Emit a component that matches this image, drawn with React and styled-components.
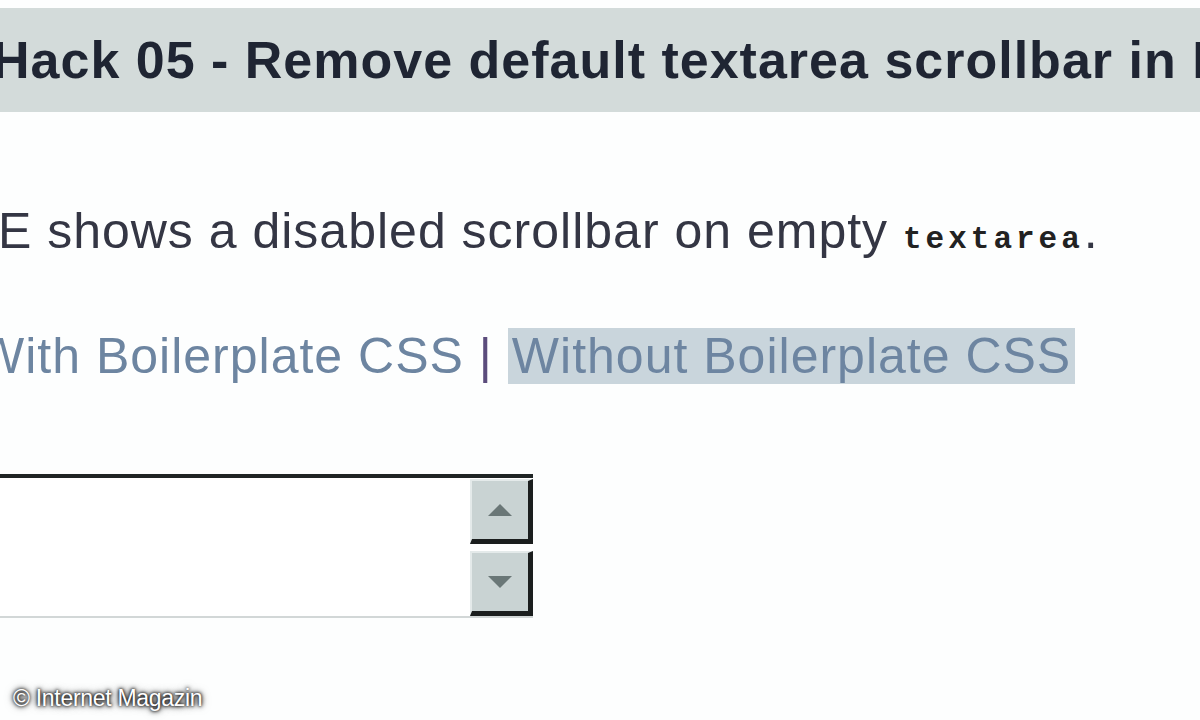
import styled, { createGlobalStyle } from 'styled-components';

const Global = createGlobalStyle`
  html, body {
    margin: 0;
    padding: 0;
    background: #ffffff;
  }
`;

const Page = styled.div`
  position: relative;
  width: 1200px;
  height: 720px;
  overflow: hidden;
  background: #fdfefe;
  font-family: "Liberation Sans", Arial, sans-serif;
`;

const Header = styled.h1`
  margin: 8px 0 0;
  height: 104px;
  display: flex;
  align-items: center;
  background: #d3dbda;
  color: #1f2533;
  font-size: 52px;
  font-weight: bold;
  letter-spacing: 1px;
  white-space: nowrap;
  text-indent: -8px;
`;

const Line = styled.p`
  margin: ${(p) => p.$top}px 0 0;
  text-indent: ${(p) => p.$indent}px;
  font-size: 50px;
  line-height: 60px;
  letter-spacing: ${(p) => p.$spacing ?? 1}px;
  white-space: nowrap;
  color: #343644;
`;

const Code = styled.code`
  font-family: "Liberation Mono", "Courier New", monospace;
  font-weight: bold;
  font-size: 31px;
  letter-spacing: 4px;
  color: #222;
`;

const Link = styled.span`
  color: #6d85a1;
  background: ${(p) => (p.$active ? '#c9d5dc' : 'transparent')};
  padding: 0 ${(p) => (p.$active ? 4 : 0)}px;
`;

const Sep = styled.span`
  color: #5b4c7c;
  margin: 0 ${(p) => p.$gap}px;
`;

const Field = styled.div`
  margin: 88px 0 0 -20px;
  width: 553px;
  height: 138px;
  display: flex;
  border-top: 4px solid #1f2424;
  border-bottom: 2px solid #d2d7d7;
  background: #ffffff;
`;

const TextArea = styled.div`
  flex: 1;
`;

const ScrollColumn = styled.div`
  width: 63px;
  display: flex;
  flex-direction: column;
  justify-content: space-between;
  padding: 1px 0 0;
`;

const ScrollButton = styled.div`
  height: 58px;
  display: flex;
  align-items: center;
  justify-content: center;
  background: #c9d3d3;
  border-top: 2px solid #e4eaea;
  border-left: 2px solid #e4eaea;
  border-right: 5px solid #1b1e1e;
  border-bottom: 5px solid #1b1e1e;
`;

const Arrow = styled.span`
  width: 0;
  height: 0;
  border-left: 12px solid transparent;
  border-right: 12px solid transparent;
  ${(p) =>
    p.$down
      ? 'border-top: 12px solid #6a7777;'
      : 'border-bottom: 12px solid #6a7777;'}
`;

const Watermark = styled.div`
  position: absolute;
  left: 13px;
  bottom: 8px;
  font-size: 23px;
  color: #ffffff;
  letter-spacing: -0.3px;
  text-shadow: 0 0 3px #000, 0 0 5px #000, 0 0 8px rgba(0, 0, 0, 0.6);
`;

export default function App() {
  return (
    <>
      <Global />
      <Page>
        <Header>Hack 05 - Remove default textarea scrollbar in IE</Header>
        <Line $top={89} $indent={-17}>
          IE shows a disabled scrollbar on empty <Code>textarea</Code>.
        </Line>
        <Line $top={56} $indent={-23} $spacing={1}>
          <Link>With Boilerplate CSS</Link>
          <Sep $gap={15}>|</Sep>
          <Link $active>Without Boilerplate CSS</Link>
        </Line>
        <Field>
          <TextArea />
          <ScrollColumn>
            <ScrollButton>
              <Arrow />
            </ScrollButton>
            <ScrollButton>
              <Arrow $down />
            </ScrollButton>
          </ScrollColumn>
        </Field>
        <Watermark>© Internet Magazin</Watermark>
      </Page>
    </>
  );
}
